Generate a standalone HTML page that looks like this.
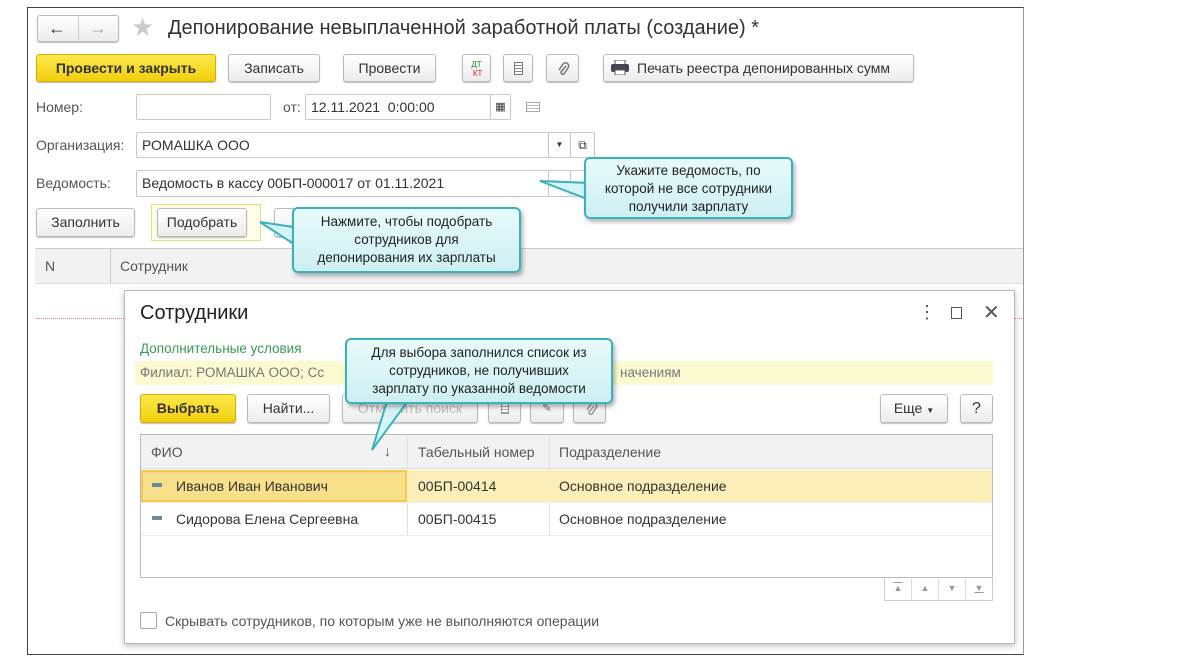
<!DOCTYPE html>
<html><head><meta charset="utf-8"><style>
*{box-sizing:border-box;margin:0;padding:0}
body{width:1200px;height:668px;background:#fff;font-family:"Liberation Sans",Arial,sans-serif;font-size:14px;color:#333;position:relative;overflow:hidden}
.a{position:absolute}
.frame{left:27px;top:7px;width:997px;height:648px;border:1px solid #444;border-right-color:#999}
.btn{position:absolute;border:1px solid #bbb;border-radius:3px;background:linear-gradient(#fff,#ececec);box-shadow:0 1px 1px rgba(0,0,0,.25);text-align:center;color:#333;font-size:14px}
.yel{background:linear-gradient(#fbe84a,#f1cf0c);border-color:#d0b000;color:#333;font-weight:bold}
.inp{position:absolute;border:1px solid #c8c8c8;border-radius:2px;background:#fff;padding-left:5px;font-size:14px;color:#333}
.lbl{position:absolute;color:#555;font-size:14px}
.call{position:absolute;border:2px solid #3ab2bd;border-radius:6px;background:linear-gradient(#e8fafb,#cdeff2);text-align:center;font-size:13.5px;line-height:18px;color:#222;box-shadow:2px 3px 4px rgba(0,0,0,.3);z-index:5}
.sep{position:absolute;width:1px;background:#ccc}
</style></head><body>
<div class="a frame"></div>
<div class="btn" style="left:37px;top:15px;width:82px;height:27px"></div>
<div class="a" style="left:78px;top:17px;width:1px;height:23px;background:#ccc"></div>
<div class="a" style="left:48px;top:15px;font-size:18px;line-height:27px;color:#333;font-weight:bold">&#8592;</div>
<div class="a" style="left:89px;top:15px;font-size:18px;line-height:27px;color:#aaa">&#8594;</div>
<div class="a" style="left:131px;top:12px;font-size:26px;color:#ccc">&#9733;</div>
<div class="a" style="left:168px;top:17px;font-size:20px;color:#333">Депонирование невыплаченной заработной платы (создание) *</div>
<div class="btn yel" style="left:36px;top:54px;width:180px;height:28px;line-height:26px">Провести и закрыть</div>
<div class="btn" style="left:228px;top:54px;width:92px;height:28px;line-height:26px">Записать</div>
<div class="btn" style="left:343px;top:54px;width:93px;height:28px;line-height:26px">Провести</div>
<div class="btn" style="left:462px;top:54px;width:29px;height:28px;font-size:8px;line-height:9px;padding-top:5px"><span style="color:#2a8a2a">ДТ</span><br><span style="color:#d22">&nbsp;КТ</span></div>
<div class="btn" style="left:503px;top:54px;width:30px;height:28px"><div class="a" style="left:10px;top:7px;width:9px;height:13px;border:1px solid #777;background:repeating-linear-gradient(#fff 0 2px,#888 2px 3px)"></div></div>
<div class="btn" style="left:546px;top:54px;width:33px;height:28px"><svg class="a" style="left:9px;top:6px" width="14" height="16"><path d="M10 5 L5 11 a2 2 0 0 0 3 2 L12 7 a3 3 0 0 0 -5 -4 L3 9" fill="none" stroke="#777" stroke-width="1.5"/></svg></div>
<div class="btn" style="left:603px;top:54px;width:311px;height:28px;line-height:26px;text-align:left;padding-left:33px">Печать реестра депонированных сумм</div>
<svg class="a" style="left:611px;top:60px" width="18" height="15"><rect x="4" y="0" width="10" height="5" fill="#fff" stroke="#556"/><rect x="0" y="4" width="18" height="8" rx="2" fill="#445"/><rect x="4" y="10" width="10" height="5" fill="#fff" stroke="#556"/></svg>
<div class="lbl" style="left:36px;top:99px">Номер:</div>
<div class="inp" style="left:136px;top:94px;width:135px;height:26px"></div>
<div class="lbl" style="left:283px;top:99px">от:</div>
<div class="inp" style="left:305px;top:94px;width:186px;height:26px;line-height:24px">12.11.2021&nbsp; 0:00:00</div>
<div class="inp" style="left:490px;top:94px;width:21px;height:26px;font-size:11px;line-height:24px;padding:0;text-align:center">&#9638;</div>
<div class="a" style="left:526px;top:102px;width:14px;height:10px;border:1px solid #aaa;background:repeating-linear-gradient(#fff 0 2px,#bbb 2px 3px)"></div>
<div class="lbl" style="left:36px;top:137px">Организация:</div>
<div class="inp" style="left:136px;top:132px;width:413px;height:26px;line-height:24px">РОМАШКА ООО</div>
<div class="inp" style="left:548px;top:132px;width:23px;height:26px;font-size:8px;line-height:24px;padding:0;text-align:center">&#9660;</div>
<div class="inp" style="left:570px;top:132px;width:25px;height:26px;font-size:12px;line-height:24px;padding:0;text-align:center">&#10697;</div>
<div class="lbl" style="left:36px;top:175px">Ведомость:</div>
<div class="inp" style="left:136px;top:170px;width:413px;height:27px;line-height:25px">Ведомость в кассу 00БП-000017 от 01.11.2021</div>
<div class="inp" style="left:548px;top:170px;width:23px;height:27px"></div>
<div class="inp" style="left:570px;top:170px;width:25px;height:27px"></div>
<div class="btn" style="left:36px;top:208px;width:99px;height:29px;line-height:27px">Заполнить</div>
<div class="a" style="left:151px;top:204px;width:110px;height:37px;border:1px solid #e8e080;background:#fffde8"></div>
<div class="btn" style="left:157px;top:208px;width:90px;height:29px;line-height:27px">Подобрать</div>
<div class="btn" style="left:274px;top:208px;width:40px;height:29px"></div>
<div class="a" style="left:35px;top:248px;width:988px;height:36px;background:#f2f2f2;border-top:1px solid #ccc;border-bottom:1px solid #ddd"></div>
<div class="sep" style="left:110px;top:249px;height:34px"></div>
<div class="lbl" style="left:45px;top:258px">N</div>
<div class="lbl" style="left:120px;top:258px">Сотрудник</div>
<div class="a" style="left:36px;top:318px;width:986px;border-top:1px dotted #e08080"></div>
<div class="a" style="left:124px;top:290px;width:891px;height:354px;background:#fff;border:1px solid #bbb;box-shadow:0 2px 6px rgba(0,0,0,.25)"></div>
<div class="a" style="left:140px;top:302px;font-size:20px;color:#222">Сотрудники</div>
<div class="a" style="left:918px;top:302px;font-size:18px;color:#555">&#8942;</div>
<div class="a" style="left:951px;top:307px;width:11px;height:12px;border:1.5px solid #555"></div>
<div class="a" style="left:983px;top:300px;font-size:20px;color:#555">&#10005;</div>
<div class="a" style="left:140px;top:341px;color:#3a9a5a;font-size:13.5px">Дополнительные условия</div>
<div class="a" style="left:135px;top:361px;width:858px;height:24px;background:#fbf9d0"></div>
<div class="a" style="left:140px;top:365px;color:#777;font-size:13.5px">Филиал: РОМАШКА ООО; Сс</div>
<div class="a" style="left:620px;top:365px;color:#777;font-size:13.5px">начениям</div>
<div class="btn yel" style="left:140px;top:394px;width:96px;height:29px;line-height:27px">Выбрать</div>
<div class="btn" style="left:247px;top:394px;width:83px;height:29px;line-height:27px">Найти...</div>
<div class="btn" style="left:342px;top:394px;width:136px;height:29px;line-height:27px;color:#bbb">Отменить поиск</div>
<div class="btn" style="left:488px;top:394px;width:33px;height:29px"><div class="a" style="left:12px;top:8px;width:8px;height:11px;border:1px solid #999;background:repeating-linear-gradient(#fff 0 2px,#aaa 2px 3px)"></div></div>
<div class="btn" style="left:530px;top:394px;width:34px;height:29px;color:#777;line-height:27px;font-size:12px">&#9998;</div>
<div class="btn" style="left:573px;top:394px;width:33px;height:29px"><svg class="a" style="left:10px;top:6px" width="14" height="16"><path d="M10 5 L5 11 a2 2 0 0 0 3 2 L12 7 a3 3 0 0 0 -5 -4 L3 9" fill="none" stroke="#999" stroke-width="1.5"/></svg></div>
<div class="btn" style="left:880px;top:394px;width:68px;height:29px;line-height:27px">Еще <span style="font-size:8px">&#9660;</span></div>
<div class="btn" style="left:960px;top:394px;width:33px;height:29px;line-height:27px;font-size:16px">?</div>
<div class="a" style="left:140px;top:434px;width:853px;height:144px;border:1px solid #bbb"></div>
<div class="a" style="left:141px;top:435px;width:851px;height:34px;background:#f2f2f2;border-bottom:1px solid #ddd"></div>
<div class="sep" style="left:407px;top:435px;height:100px;background:#e0e0e0"></div>
<div class="sep" style="left:549px;top:435px;height:100px;background:#e0e0e0"></div>
<div class="lbl" style="left:151px;top:444px">ФИО</div>
<div class="lbl" style="left:384px;top:443px">&#8595;</div>
<div class="lbl" style="left:418px;top:444px">Табельный номер</div>
<div class="lbl" style="left:559px;top:444px">Подразделение</div>
<div class="a" style="left:141px;top:470px;width:851px;height:32px;background:#fbeeb8"></div>
<div class="a" style="left:141px;top:470px;width:266px;height:32px;background:#f8e08a;border:2px solid #f2c94c"></div>
<div class="a" style="left:141px;top:502px;width:851px;border-top:1px solid #eee"></div>
<div class="a" style="left:141px;top:535px;width:851px;border-top:1px solid #eee"></div>
<div class="a" style="left:152px;top:483px;width:10px;height:4px;background:#6a8aa0"></div>
<div class="a" style="left:152px;top:516px;width:10px;height:4px;background:#6a8aa0"></div>
<div class="a" style="left:176px;top:478px;color:#333">Иванов Иван Иванович</div>
<div class="a" style="left:418px;top:478px;color:#333">00БП-00414</div>
<div class="a" style="left:559px;top:478px;color:#333">Основное подразделение</div>
<div class="a" style="left:176px;top:511px;color:#333">Сидорова Елена Сергеевна</div>
<div class="a" style="left:418px;top:511px;color:#333">00БП-00415</div>
<div class="a" style="left:559px;top:511px;color:#333">Основное подразделение</div>
<div class="a" style="left:884px;top:577px;width:109px;height:24px;border:1px solid #ccc;border-top:none;display:flex;font-size:9px;color:#999">
<div style="flex:1;text-align:center;line-height:22px;border-right:1px solid #ddd"><u style="text-decoration:overline">&#9650;</u></div><div style="flex:1;text-align:center;line-height:22px;border-right:1px solid #ddd">&#9650;</div><div style="flex:1;text-align:center;line-height:22px;border-right:1px solid #ddd">&#9660;</div><div style="flex:1;text-align:center;line-height:22px"><u>&#9660;</u></div></div>
<div class="a" style="left:140px;top:612px;width:17px;height:17px;border:1px solid #aaa;border-radius:2px"></div>
<div class="lbl" style="left:165px;top:613px">Скрывать сотрудников, по которым уже не выполняются операции</div>
<svg class="a" style="left:0;top:0;z-index:4" width="1200" height="668">
<polygon points="260,222 300,228 300,248" fill="#d6f3f5" stroke="#3ab2bd" stroke-width="2"/>
<polygon points="540,181 590,183 590,200" fill="#d6f3f5" stroke="#3ab2bd" stroke-width="2"/>
<polygon points="372,450 388,398 410,398" fill="#d6f3f5" stroke="#3ab2bd" stroke-width="2"/>
</svg>
<div class="call" style="left:292px;top:207px;width:229px;height:66px;padding-top:4px">Нажмите, чтобы подобрать<br>сотрудников для<br>депонирования их зарплаты</div>
<div class="call" style="left:584px;top:157px;width:209px;height:62px;padding-top:3px">Укажите ведомость, по<br>которой не все сотрудники<br>получили зарплату</div>
<div class="call" style="left:345px;top:338px;width:268px;height:66px;padding-top:4px">Для выбора заполнился список из<br>сотрудников, не получивших<br>зарплату по указанной ведомости</div>
</body></html>
